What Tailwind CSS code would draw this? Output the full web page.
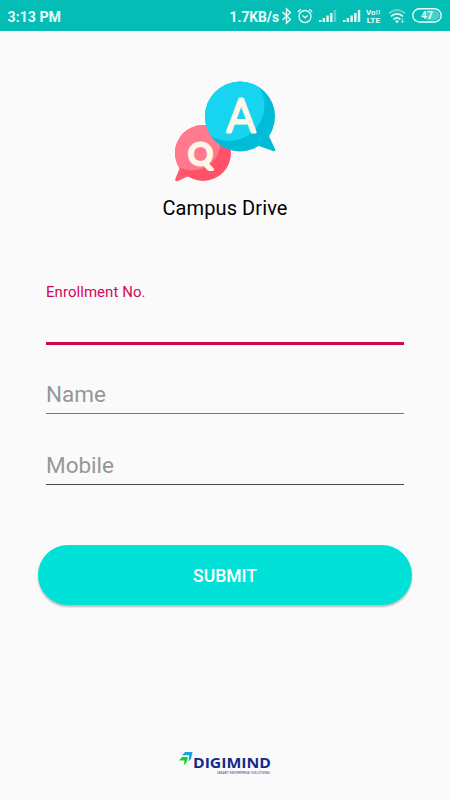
<!DOCTYPE html>
<html lang="en">
<head>
    <meta charset="UTF-8">
    <meta name="viewport" content="width=device-width, initial-scale=1.0">
    <title>Campus Drive</title>
    <script src="https://cdn.jsdelivr.net/npm/@tailwindcss/browser@4"></script>
</head>
<body class="bg-[#fafafa] font-['Roboto',sans-serif]">
    <div class="flex flex-col h-[800px] w-[450px] overflow-hidden">
        <!-- Status bar -->
        <header class="h-[31px] shrink-0 bg-[#04beb6] text-[#e9fbf9] flex items-center pl-[7px] pr-2">
            <svg class="w-[56px] h-[31px]" viewBox="0 0 56 31" fill="currentColor">
                <text x="0.5" y="21.5" font-size="14" font-weight="700" textLength="53.5" lengthAdjust="spacingAndGlyphs">3:13 PM</text>
            </svg>
            <svg class="ml-auto w-[51px] h-[31px]" viewBox="0 0 51 31" fill="currentColor">
                <text x="-0.5" y="21.5" font-size="14" font-weight="700" textLength="49.5" lengthAdjust="spacingAndGlyphs">1.7KB/s</text>
            </svg>
            <!-- Bluetooth -->
            <svg class="w-[11px] h-[18px]" viewBox="0 0 11 18" fill="none" stroke="currentColor" stroke-width="1.4">
                <path d="M1.500 5l8 7.500-4 3.600V1.900l4 3.600-8 7.500"/>
            </svg>
            <!-- Alarm -->
            <svg class="ml-[5px] w-[16px] h-[16px]" viewBox="0 0 16 16" fill="none" stroke="currentColor" stroke-width="1.3">
                <circle cx="8" cy="8.500" r="6"/>
                <path d="M5.500 7.500L8 9.800l2.700-2.300M.8 4l3-2.700M15.200 4l-3-2.700"/>
            </svg>
            <svg class="ml-[6px] w-[18px] h-[14px]" viewBox="0 0 18 14" fill="currentColor">
                <path d="M0 11h2.400v2H0zM3.700 9h2.400v4H3.700zM7.400 6.500h2.400V13H7.400zM11.100 4h2.400v9h-2.400z"/>
                <path d="M14.800 1h2.400v12h-2.400z" opacity=".35"/>
            </svg>
            <svg class="ml-[6px] w-[18px] h-[14px]" viewBox="0 0 18 14" fill="currentColor">
                <path d="M0 11h2.400v2H0zM3.700 9h2.400v4H3.700zM7.400 6.500h2.400V13H7.400zM11.100 4h2.400v9h-2.400zM14.800 1h2.400v12h-2.400z"/>
            </svg>
            <svg class="ml-[5px] w-[16px] h-[16px]" viewBox="0 0 16 16" fill="currentColor">
                <text x="0" y="6.600" font-size="7.500" font-weight="700" textLength="9.500" lengthAdjust="spacingAndGlyphs">Vo</text>
                <text x="0.700" y="14.600" font-size="7.500" font-weight="700" textLength="13.500" lengthAdjust="spacingAndGlyphs">LTE</text>
                <path d="M10.500 2q1.500 2.200 0 4.500M12.900 2q1.500 2.200 0 4.500" fill="none" stroke="currentColor" stroke-width="1"/>
            </svg>
            <!-- Wifi -->
            <svg class="ml-[6px] w-[18px] h-[16px]" viewBox="0 0 18 16" fill="none" stroke="currentColor" stroke-width="1.700">
                <path d="M1 5.500q8-7 16 0" opacity=".4"/>
                <path d="M3 8.300q6-5 12 0M5.500 11.300q3.500-3 7 0"/>
                <path d="M7 13q2-1.500 4 0l-2 2.200z" fill="currentColor" stroke="none"/>
                <path d="M14.500 10.500v4M13 13.200l1.500 1.600 1.500-1.600" stroke-width=".8" opacity=".8"/>
            </svg>
            <svg class="ml-[6px] w-[30px] h-[15px]" viewBox="0 0 30 15">
                <rect x=".8" y=".8" width="28.400" height="13.200" rx="6.600" fill="none" stroke="currentColor" stroke-width="1.400"/>
                <path d="M15 2.500h7.500a4.900 4.900 0 010 9.800H15z" fill="currentColor" opacity=".3"/>
                <text x="9" y="11.400" font-size="11" font-weight="700" fill="currentColor" textLength="12" lengthAdjust="spacingAndGlyphs">47</text>
            </svg>
        </header>

        <main class="flex-1 flex flex-col items-center">
            <!-- Logo -->
            <svg class="mt-[44px] w-[110px] h-[112px]" viewBox="170 75 110 112">
                <defs>
                    <clipPath id="q-bubble"><circle cx="203" cy="153" r="28"/></clipPath>
                    <clipPath id="a-bubble"><circle cx="240" cy="116.500" r="35"/></clipPath>
                </defs>
                <path d="M180.500 166l-5.200 13q-.8 2.800 2 2.200L193 174z" fill="#ff5a70"/>
                <circle cx="203" cy="153" r="28" fill="#ff5268"/>
                <circle cx="192" cy="142" r="28.500" fill="#ff7a8c" clip-path="url(#q-bubble)"/>
                <path d="M268 134l7 15q.8 3-2 2l-20-7z" fill="#00bad6"/>
                <circle cx="240" cy="116.500" r="35" fill="#00bcd8"/>
                <circle cx="229" cy="105.500" r="35.500" fill="#17d5f0" clip-path="url(#a-bubble)"/>
                <g fill="#fff7e8" stroke="#fff7e8" stroke-linejoin="round">
                    <text x="226.500" y="132" font-size="47" font-weight="300" stroke-width="3" textLength="29" lengthAdjust="spacingAndGlyphs">A</text>
                    <text x="188" y="165" font-family="Lato" font-size="30" stroke-width="2.800" textLength="25" lengthAdjust="spacingAndGlyphs">Q</text>
                </g>
            </svg>
            <h1 class="mt-[6px] text-[20px] leading-[30px] tracking-[0.1px] text-black">Campus Drive</h1>

            <form id="enroll-form" class="mt-[61px] w-full flex flex-col">
                <div class="mx-[46px] h-[61px] border-b-[3px] border-[#cc0850]">
                    <label for="enrollment" class="block text-[15px] leading-[20px] tracking-[0.05px] text-[#d3085a] mt-[-2px]">Enrollment No.</label>
                    <input type="text" id="enrollment" class="block w-full h-[38px] outline-none text-[22px]">
                </div>
                <input type="text" id="name" placeholder="Name" class="mx-[46px] mt-[31px] h-[38px] pb-[1px] border-b border-[#777] outline-none text-[22.500px] placeholder:text-[#979797]">
                <input type="text" id="mobile" placeholder="Mobile" class="mx-[46px] mt-[33px] h-[38px] pb-[1px] border-b border-[#4a4a4a] outline-none text-[22.500px] placeholder:text-[#979797]">
                <button type="submit" class="mx-[38px] mt-[60px] h-[60px] pt-[2px] rounded-full bg-[#00e2d8] text-white text-[17.500px] font-medium shadow-[0_2px_2px_rgba(0,0,0,0.25)]">SUBMIT</button>
            </form>

            <!-- Footer brand -->
            <svg class="mt-auto mb-[20px] w-[100px] h-[32px]" viewBox="175 748 100 32">
                <path d="M185 752h7.500l-1.500 7-2.500 2.500.8-6.300h-7.300z" fill="#1ba3e0"/>
                <path d="M182 757h6l-1.500 5.500-2.500 2.500.5-4.500h-5.500z" fill="#18cf2d"/>
                <text x="193" y="768.300" font-family="Open Sans" font-weight="700" font-size="14" fill="#142a8c" textLength="78" lengthAdjust="spacingAndGlyphs">DIGIMIND</text>
                <text x="217" y="773.500" font-size="3.400" fill="#30408f" textLength="53" lengthAdjust="spacingAndGlyphs">SMART ENTERPRISE SOLUTIONS</text>
            </svg>
        </main>
    </div>

    <script>
        document.getElementById('enroll-form').addEventListener('submit', (e) => {
            e.preventDefault();
        });
    </script>
</body>
</html>
